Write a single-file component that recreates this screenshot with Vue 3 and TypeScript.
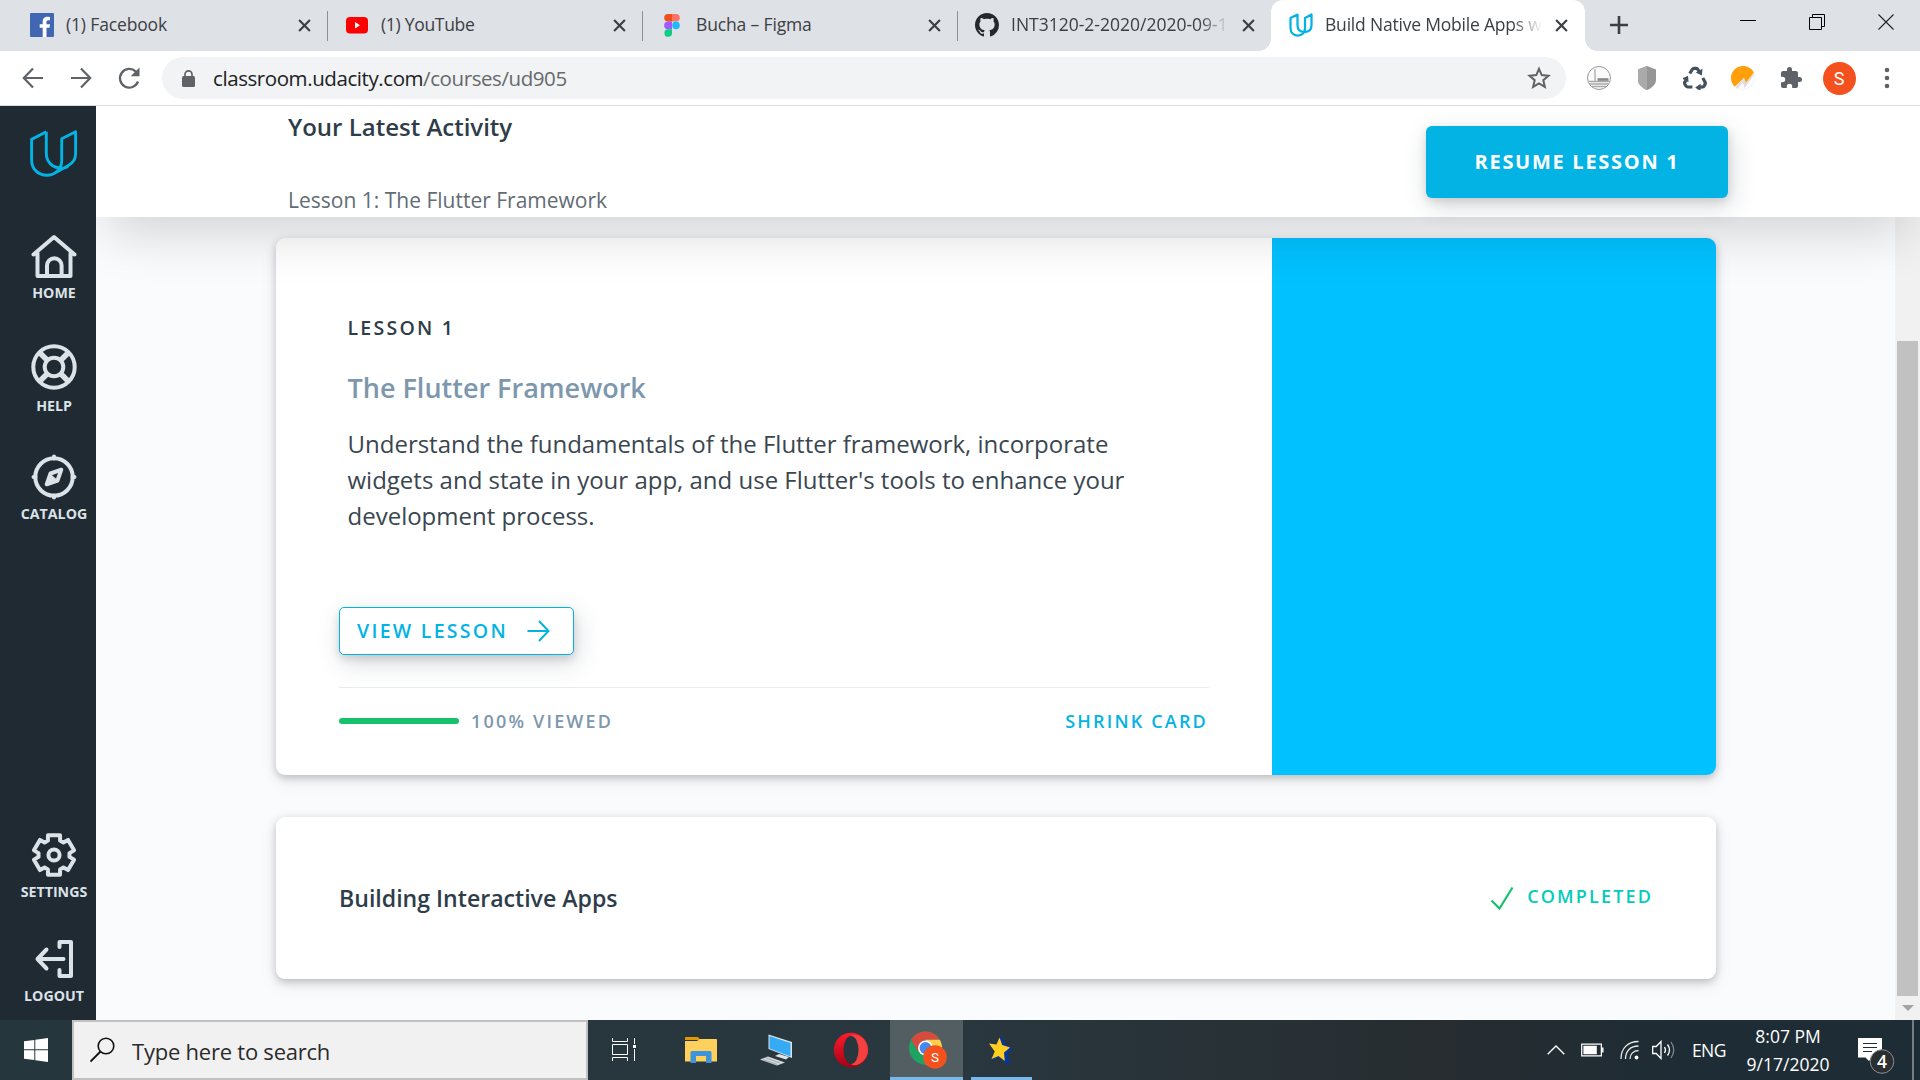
<script setup lang="ts">
interface Tab {
  id: string
  title: string
  active?: boolean
  fade?: boolean
  spacing: number
}

const tabs: Tab[] = [
  { id: 'facebook', title: '(1) Facebook', spacing: -0.15 },
  { id: 'youtube', title: '(1) YouTube', spacing: -0.3 },
  { id: 'figma', title: 'Bucha – Figma', spacing: -0.15 },
  { id: 'github', title: 'INT3120-2-2020/2020-09-1', fade: true, spacing: 0 },
  { id: 'udacity', title: 'Build Native Mobile Apps w', active: true, fade: true, spacing: -0.2 },
]

// Outline of a six-toothed gear centred on 24,24
const gear = (() => {
  const points: string[] = []
  for (let k = 0; k < 6; k++) {
    const shape: [number, number][] = [[-23, 15.6], [-17, 20.6], [17, 20.6], [23, 15.6]]
    for (const [offset, r] of shape) {
      const a = ((k * 60 - 90 + offset) * Math.PI) / 180
      points.push(`${(24 + r * Math.cos(a)).toFixed(2)},${(24 + r * Math.sin(a)).toFixed(2)}`)
    }
  }
  return points.join(' ')
})()
</script>

<template>
  <div class="screen">
    <header class="tabstrip">
      <div v-for="tab in tabs" :key="tab.id" class="tab" :class="[tab.id, { active: tab.active }]">
        <svg v-if="tab.id === 'facebook'" class="fav" viewBox="0 0 24 24">
          <rect width="24" height="24" rx="1" fill="#4267b2" />
          <path d="M16.500 24v-9.200h3l.5-3.600h-3.500V9c0-1.100.4-1.800 1.900-1.800H20V4c-.4 0-1.500-.2-2.700-.2-2.800 0-4.600 1.700-4.600 4.700v2.700h-3v3.600h3V24z" fill="#fff" />
        </svg>
        <svg v-else-if="tab.id === 'youtube'" class="fav" viewBox="0 0 24 24">
          <rect x="1" y="4" width="22" height="16.500" rx="4" fill="#f00" />
          <path d="M10 9v6.500l5-3.200z" fill="#fff" />
        </svg>
        <svg v-else-if="tab.id === 'figma'" class="fav" viewBox="0 0 24 24">
          <path d="M12 1H8a3.800 3.800 0 0 0 0 7.600h4z" fill="#f24e1e" />
          <path d="M12 1h4a3.800 3.800 0 0 1 0 7.600h-4z" fill="#ff7262" />
          <path d="M12 8.600H8a3.800 3.800 0 0 0 0 7.600h4z" fill="#a259ff" />
          <circle cx="16" cy="12.400" r="3.800" fill="#1abcfe" />
          <path d="M12 16.200H8a3.800 3.800 0 1 0 4 3.800z" fill="#0acf83" />
        </svg>
        <svg v-else-if="tab.id === 'github'" class="fav" viewBox="0 0 16 16">
          <path fill="#24292e" fill-rule="evenodd" d="M8 0C3.580 0 0 3.580 0 8c0 3.540 2.290 6.530 5.470 7.590.4.070.55-.17.55-.38 0-.19-.01-.82-.01-1.490-2.010.37-2.530-.49-2.690-.94-.09-.23-.48-.94-.82-1.130-.28-.15-.68-.52-.01-.53.63-.01 1.080.58 1.230.82.72 1.210 1.870.87 2.330.66.07-.52.28-.87.51-1.070-1.780-.2-3.640-.89-3.640-3.950 0-.87.31-1.590.82-2.150-.08-.2-.36-1.020.08-2.120 0 0 .67-.21 2.200.82.64-.18 1.320-.27 2-.27s1.360.09 2 .27c1.530-1.040 2.200-.82 2.200-.82.44 1.100.16 1.920.08 2.120.51.56.82 1.270.82 2.150 0 3.070-1.870 3.750-3.650 3.950.29.25.54.73.54 1.480 0 1.070-.01 1.930-.01 2.200 0 .21.15.46.55.38A8.010 8.010 0 0 0 16 8c0-4.420-3.580-8-8-8z" />
        </svg>
        <svg v-else class="fav" viewBox="0 0 48 48">
          <path d="M17 3 3 10v20c0 10 7 15 15 15s14-6 14-14V10L45 3v21c0 9-5 14-14 14S17 33 17 24z" fill="none" stroke="#02b3e4" stroke-width="4.500" stroke-linejoin="round" />
        </svg>
        <span class="tab-title" :class="{ fade: tab.fade }" :style="{ letterSpacing: tab.spacing + 'px' }">{{ tab.title }}</span>
        <svg class="tab-close" viewBox="0 0 12 12"><path d="M1 1l10 10M11 1L1 11" stroke="#3c4043" stroke-width="2" /></svg>
      </div>
      <svg class="new-tab" viewBox="0 0 18 18"><path d="M9 0v18M0 9h18" stroke="#3c4043" stroke-width="2.600" /></svg>
      <div class="window-buttons">
        <svg viewBox="0 0 16 16"><path d="M0 6.500h16" stroke="#000" /></svg>
        <svg viewBox="0 0 16 16"><path d="M.5 3.500h12v12H.5zM3.500 3.500v-3h12v12h-3" fill="none" stroke="#000" /></svg>
        <svg viewBox="0 0 16 16"><path d="M.5.5l15 15M15.500.5l-15 15" stroke="#222" stroke-width="1.100" /></svg>
      </div>
    </header>

    <div class="toolbar">
      <svg class="nav" viewBox="0 0 24 24"><path d="M22 12H3M12 2.500L2.800 12l9.200 9.500" fill="none" stroke="#5f6368" stroke-width="2.200" /></svg>
      <svg class="nav" viewBox="0 0 24 24"><path d="M2 12h19M12 2.500l9.200 9.500-9.200 9.500" fill="none" stroke="#5f6368" stroke-width="2.200" /></svg>
      <svg class="nav" viewBox="0 0 24 24"><path d="M21 15.500A9.300 9.300 0 1 1 18.800 5.600L21 8" fill="none" stroke="#5f6368" stroke-width="2.300" /><path d="M22.500 1.500v8.800h-8.800z" fill="#5f6368" /></svg>
      <div class="omnibox">
        <svg class="lock" viewBox="0 0 13 17"><rect y="6" width="13" height="11" rx="1.500" fill="#5f6368" /><path d="M3 7V4.300a3.500 3.500 0 0 1 7 0V7" fill="none" stroke="#5f6368" stroke-width="1.700" /></svg>
        <span class="url">classroom.udacity.com<em>/courses/ud905</em></span>
        <svg class="star" viewBox="0 0 24 24"><path d="M12 2.800l2.700 6.300 6.800.6-5.200 4.500 1.600 6.700-5.900-3.600-5.900 3.600 1.600-6.700L2.500 9.700l6.800-.6z" fill="none" stroke="#5f6368" stroke-width="2" /></svg>
      </div>
      <div class="extensions">
        <svg viewBox="0 0 24 24"><circle cx="12" cy="12" r="11.500" fill="#fafafa" stroke="#999" /><path d="M8 3v12M2 15.500h20M2.500 18h19M5 20.500h14" stroke="#aaa" stroke-width="1.300" /><path d="M10.500 13.500h11" stroke="#888" stroke-width="2.600" /></svg>
        <svg viewBox="0 0 24 24"><path d="M12 0l9 3.500V14c0 4-4 8-9 10-5-2-9-6-9-10V3.500z" fill="#969696" /><path d="M12 0L3 3.500V14c0 4 4 8 9 10z" fill="#aaa" /></svg>
        <svg viewBox="0 0 24 24">
          <g v-for="r in [0, 120, 240]" :key="r" :transform="`rotate(${r} 12 13.500)`">
            <path d="M6.800 7.500L9.300 3.400q.7-1 1.900-1h2q1 0 1.600 1l1.200 1.900" fill="none" stroke="#44505c" stroke-width="3.200" />
            <path d="M19.500 2.800l-.7 6.600-6-2.900z" fill="#44505c" />
          </g>
        </svg>
        <svg viewBox="0 0 24 24"><circle cx="12" cy="12" r="11.500" fill="#fff" stroke="#eee" stroke-width=".8" /><path d="M3.800 20.700A12 12 0 1 1 22.800 6.700L14.500 17.500l-1.500-5.500z" fill="#ff9f0a" /><path d="M13 12L4.500 21.500l2 1.200 5.500-6 1.500 5.500 10-14v-1.500l-8.500 9.800z" fill="#dedede" /></svg>
        <svg viewBox="0 0 24 24"><path fill="#5f6368" d="M20.500 11H19V7c0-1.100-.9-2-2-2h-4V3.500a2.500 2.500 0 0 0-5 0V5H4c-1.100 0-2 .9-2 2v3.800h1.500a2.700 2.700 0 0 1 0 5.400H2V20c0 1.100.9 2 2 2h3.800v-1.500a2.700 2.700 0 0 1 5.400 0V22H17c1.100 0 2-.9 2-2v-4h1.500a2.500 2.500 0 0 0 0-5z" /></svg>
        <span class="avatar">S</span>
        <svg viewBox="0 0 24 24"><g fill="#5f6368"><circle cx="12" cy="4" r="2.300" /><circle cx="12" cy="12" r="2.300" /><circle cx="12" cy="20" r="2.300" /></g></svg>
      </div>
    </div>

    <div class="page">
      <nav class="sidebar">
        <svg class="logo" viewBox="0 0 48 48">
          <path d="M16.300 1.800L1.600 9.400V30c0 9.500 7 15.200 15.200 15.200 8.500 0 14.900-6.500 14.900-14.500V8.800L45.600 1.800V24c0 6-3.500 9.500-7.600 11.700L24 43.500M16.300 1.800V23c0 9 6 15 15.200 15.200 2.500 0 5-.9 6.500-1.800" fill="none" stroke="#02b3e4" stroke-width="2.900" stroke-linejoin="round" />
        </svg>
        <a class="item home">
          <svg viewBox="0 0 48 48"><path d="M3.500 22L24 4.500 44.500 22M7.500 20v23.500h33V20M17 43V33a7.300 7.300 0 0 1 14.600 0v10" transform="translate(0 -.5)" /></svg>
          <span>HOME</span>
        </a>
        <a class="item help">
          <svg viewBox="0 0 48 48"><circle cx="24" cy="24" r="20.700" /><circle cx="24" cy="24" r="9.300" /><path d="M9.500 9.500l8 8M38.500 9.500l-8 8M9.500 38.500l8-8M38.500 38.500l-8-8" stroke-width="5.500" stroke-linecap="butt" /></svg>
          <span>HELP</span>
        </a>
        <a class="item catalog">
          <svg viewBox="0 0 48 48"><circle cx="24" cy="24" r="18.700" /><path d="M24 3.500v2M24 42.500v2M3.500 24h2M42.500 24h2" /><path d="M31.300 16.700L20.500 20.500l-3.800 10.800L27.500 27.500z" /><path d="M20 21l7.500 6.500-11 4z" fill="#dbe2e8" stroke-width="1" /></svg>
          <span>CATALOG</span>
        </a>
        <div class="spacer"></div>
        <a class="item settings">
          <svg viewBox="0 0 48 48"><polygon :points="gear" /><circle cx="24" cy="24" r="5.600" /></svg>
          <span>SETTINGS</span>
        </a>
        <a class="item logout">
          <svg viewBox="0 0 48 48"><path d="M29.500 12V7h11.500v34H29.500v-6M33.500 24H7.500M16.500 14.500L7.500 24l9 9.500" /></svg>
          <span>LOGOUT</span>
        </a>
      </nav>

      <main class="classroom">
        <section class="activity">
          <div class="activity-text">
            <h1>Your Latest Activity</h1>
            <p>Lesson 1: The Flutter Framework</p>
          </div>
          <button class="resume">RESUME LESSON 1</button>
        </section>
        <div class="scroll-area">
          <div class="cards">
            <article class="lesson">
              <div class="lesson-body">
                <div class="lesson-text">
                  <h3>LESSON 1</h3>
                  <h2>The Flutter Framework</h2>
                  <p>Understand the fundamentals of the Flutter framework, incorporate<br />widgets and state in your app, and use Flutter's tools to enhance your<br />development process.</p>
                </div>
                <button class="view">
                  <span>VIEW LESSON</span>
                  <svg viewBox="0 0 22 22"><path d="M0 11h21M11.500 1L21 11l-9.500 10" fill="none" stroke="#02b3e4" stroke-width="2" /></svg>
                </button>
                <footer class="lesson-foot">
                  <div class="bar"></div>
                  <span class="viewed">100% VIEWED</span>
                  <a class="shrink">SHRINK CARD</a>
                </footer>
              </div>
              <div class="lesson-art"></div>
            </article>
            <article class="lesson collapsed">
              <h2>Building Interactive Apps</h2>
              <div class="done">
                <svg viewBox="0 0 24 24"><path d="M1.500 14.500l8 8L22.500 1.500" fill="none" stroke="#15c26b" stroke-width="2.200" /></svg>
                <span>COMPLETED</span>
              </div>
            </article>
          </div>
          <div class="scrollbar">
            <div class="thumb"></div>
            <svg viewBox="0 0 12 6"><path d="M0 0h12L6 6z" fill="#a3a3a3" /></svg>
          </div>
        </div>
      </main>
    </div>

    <footer class="taskbar">
      <div class="start">
        <svg viewBox="0 0 24 24"><path d="M0 3.300L10.300 1.900v9.400H0zM11.300 1.700L24 0v11.300H11.300zM0 12.300h10.300v9.700L0 20.700zM11.300 12.300H24V24l-12.700-1.800z" fill="#fff" /></svg>
      </div>
      <div class="search">
        <svg viewBox="0 0 26 26"><circle cx="16" cy="9" r="7.800" fill="none" stroke="#111" stroke-width="1.600" /><path d="M10.500 14.500L.5 24.500" stroke="#111" stroke-width="1.800" /></svg>
        <span>Type here to search</span>
      </div>
      <div class="apps">
        <div class="app view-app">
          <svg width="24" height="24" viewBox="0 0 24 24"><path d="M.5 0v3.500h15V0M.5 6.500h15v10H.5zM.5 23v-3.500h15V23M22.500 0v6M22.500 11v12" fill="none" stroke="#fff" /><rect x="21" y="7" width="3" height="3" fill="#fff" /></svg>
        </div>
        <div class="app">
          <svg width="34" height="34" viewBox="0 0 34 34"><path d="M1 5q0-1 1-1h12l2.500 3H1z" fill="#dd9a02" /><path d="M1 8h12l3-2h16q1 0 1 1v21.500H1z" fill="#ffd15c" /><path d="M6.500 30V19.500q0-1.500 1.500-1.500h18q1.500 0 1.500 1.500V30H22v-7H12v7z" fill="#3d94dc" /></svg>
        </div>
        <div class="app">
          <svg width="34" height="34" viewBox="0 0 34 34"><path d="M9.500 1.500L33 9v16L9.500 16z" fill="#d9e5ec" /><path d="M10.500 3L31.500 10v13.500L10.500 15.500z" fill="#35aaf5" /><path d="M16 23l4-2 10 3-3 2.500z" fill="#dfe5e9" /><path d="M1 26.500l8-3 17 6L18 32.500z" fill="#d3d9dd" /><path d="M4 26.500l14 5M7 25l14 5" stroke="#89949b" stroke-width=".7" /></svg>
        </div>
        <div class="app">
          <svg width="36" height="36" viewBox="0 0 36 36"><defs><linearGradient id="op" x1="0" y1="0" x2="0" y2="1"><stop offset="0" stop-color="#ff1b2d" /><stop offset="1" stop-color="#a70014" /></linearGradient></defs><circle cx="18" cy="18" r="17.200" fill="url(#op)" /><path d="M18 3.500c5-3 17 3 17 14.500S23 36 18 32z" fill="#f4403f" /><ellipse cx="18" cy="18" rx="7.500" ry="14" fill="#28363d" /></svg>
        </div>
        <div class="app current">
          <svg width="38" height="38" viewBox="0 0 38 38">
            <circle cx="16.500" cy="17" r="16.500" fill="#1da462" />
            <path d="M2.200 8.800A16.500 16.500 0 0 1 30.800 8.800H16.500L9.400 21z" fill="#d84a3d" />
            <path d="M30.800 8.800A16.500 16.500 0 0 1 16.500 33.500L23.600 21 16.500 8.800z" fill="#fdcf48" />
            <circle cx="16.500" cy="17" r="7.500" fill="#fff" /><circle cx="16.500" cy="17" r="5.900" fill="#4688f1" />
            <circle cx="26" cy="26" r="11.800" fill="#f4511e" />
            <text x="26" y="30.800" text-anchor="middle" font-family="Roboto, sans-serif" font-size="13.500" fill="#fff">S</text>
          </svg>
        </div>
        <div class="app running">
          <svg width="28" height="30" viewBox="0 0 28 30"><path d="M15.500 .5l4 8.500 7.500 4.500-5 5 2 10.500-4.500-.5-5-6L6 25l3-9-6-8 9 1z" fill="#08379b" /><path d="M13.500 2.500l2.700 7.500 7.800 2.500-6 5 .8 8.500-6.300-5L5.500 24l3.300-7.500-5.800-8 7.500 1z" fill="#ffce1f" /></svg>
        </div>
      </div>
      <div class="tray">
        <svg class="t-chev" viewBox="0 0 18 10"><path d="M.7 9.300L9 1l8.300 8.300" fill="none" stroke="#fff" stroke-width="1.400" /></svg>
        <svg class="t-bat" viewBox="0 0 24 14"><path d="M.75.75h20.500v12.500H.75z" fill="none" stroke="#fff" stroke-width="1.300" /><path d="M2.500 2.500h14v9h-14zM22 4.500h1.500v5H22z" fill="#fff" /></svg>
        <svg class="t-wifi" viewBox="0 0 20 20"><g fill="none" stroke="#e6e9ea" stroke-width="1.300"><path d="M1 19C1 8 8 1.500 18.500 1.500M5.500 19c0-8 5-13 13-13M10 19c0-5 3.500-8.500 8.500-8.500" /></g><circle cx="16.500" cy="17.500" r="1.900" fill="#fff" /></svg>
        <svg class="t-vol" viewBox="0 0 24 20"><path d="M.7 6.500h3.500L9 1.500v17l-4.800-5H.7z" fill="none" stroke="#fff" stroke-width="1.300" /><path d="M12.500 7q2 3 0 6M15.500 4.500q4 5.500 0 11" fill="none" stroke="#fff" stroke-width="1.300" /><path d="M19 2q5.500 8 0 16" fill="none" stroke="#7e888d" stroke-width="1.300" /></svg>
        <span class="t-lang">ENG</span>
        <div class="t-clock"><span class="time">8:07 PM</span><span class="date">9/17/2020</span></div>
        <svg class="t-note" viewBox="0 0 37 37">
          <path d="M0 0h24v19.500H13.500L11 23l-3.500-3.500H0z" fill="#fff" />
          <path d="M5 5.500h14M5 9.500h14M5 13.500h9" stroke="#1f2c34" stroke-width="1.200" />
          <circle cx="24" cy="23.500" r="11.800" fill="#2b2e31" stroke="#8b9093" />
          <text x="24" y="30" text-anchor="middle" font-family="'Open Sans', sans-serif" font-weight="600" font-size="17.500" fill="#fff">4</text>
        </svg>
        <div class="t-edge"></div>
      </div>
    </footer>
  </div>
</template>

<style>
body { margin: 0; overflow: hidden; }
</style>

<style scoped>
* { box-sizing: border-box; }
.screen { width: 1920px; height: 1080px; display: flex; flex-direction: column; overflow: hidden; font-family: "Open Sans", "Noto Sans", sans-serif; background: #fff; }
h1, h2, h3, p { margin: 0; }
svg { display: block; flex: none; }
span, h1, h2, h3, button { white-space: nowrap; }

.tabstrip { display: flex; align-items: center; height: 51px; background: #dee1e6; flex: none; }
.tab { display: flex; align-items: center; width: 315px; height: 51px; padding: 0 17px 1px; position: relative; flex: none; }
.tab:first-child { width: 328px; padding-left: 30px; }
.tab.github { padding-right: 18px; }
.tab.active { background: #fff; border-radius: 12px 12px 0 0; width: 314px; margin-left: -2px; padding-left: 18px; }
.tab:not(.active):not(.github)::after { content: ""; position: absolute; right: 0; top: 11px; width: 1.500px; height: 30px; background: #8b8f94; }
.tab.active::before, .tab.active::after { content: ""; position: absolute; bottom: 0; width: 12px; height: 12px; }
.tab.active::before { left: -12px; background: radial-gradient(circle at 0 0, transparent 11.500px, #fff 12px); }
.tab.active::after { right: -12px; background: radial-gradient(circle at 100% 0, transparent 11.500px, #fff 12px); }
.fav { width: 24px; height: 24px; margin-right: 12px; }
.tab-title { flex: 1; min-width: 0; font-size: 17.500px; line-height: 26px; color: #3c4043; padding-bottom: 2px; }
.tab-title.fade { mask-image: linear-gradient(90deg, #000 calc(100% - 30px), transparent); }
.tab-close { width: 13px; height: 13px; margin-left: 13px; }
.new-tab { width: 18px; height: 18px; margin-left: 25px; margin-bottom: 2px; }
.window-buttons { display: flex; gap: 53px; margin-left: auto; margin-right: 26px; padding-bottom: 8px; }
.window-buttons svg { width: 16px; height: 16px; }

.toolbar { height: 55px; flex: none; display: flex; align-items: center; padding-left: 21px; border-bottom: 1px solid #dadce0; }
.nav { width: 24px; height: 24px; margin-right: 24px; }
.omnibox { width: 1404px; height: 42px; margin-left: -3px; border-radius: 21px; background: #f1f3f4; display: flex; align-items: center; padding: 0 15px 0 20px; }
.lock { width: 13px; height: 17px; margin-right: 18px; }
.url { flex: 1; font-size: 20.500px; line-height: 30px; color: #202124; letter-spacing: -0.42px; }
.url em { font-style: normal; color: #66696d; }
.star { width: 24px; height: 24px; }
.extensions { display: flex; align-items: center; gap: 24px; margin-left: 21px; }
.extensions svg { width: 24px; height: 24px; }
.avatar { width: 33px; height: 33px; margin: 0 -4.500px; border-radius: 50%; background: #f4511e; color: #fff; font: 18px/33px Roboto, sans-serif; text-align: center; }

.page { display: flex; height: 914px; flex: none; }
.sidebar { width: 96px; background: #202a32; display: flex; flex-direction: column; flex: none; padding-left: 12px; position: relative; z-index: 3; }
.logo { width: 48px; height: 48px; margin: 24px 0 0 18px; }
.item { display: flex; flex-direction: column; align-items: center; color: #dbe2e8; font-size: 14.200px; font-weight: 700; line-height: 20px; }
.item svg { width: 48px; height: 48px; fill: none; stroke: #dbe2e8; stroke-width: 4px; stroke-linejoin: round; stroke-linecap: round; }
.home { margin-top: 55px; }
.home span { margin-top: 2px; }
.help { margin-top: 40px; }
.help span { margin-top: 5px; }
.catalog { margin-top: 37px; }
.catalog span { margin-top: 3px; }
.spacer { flex: 1; }
.settings span { margin-top: 3px; }
.logout { margin: 33px 0 14px; }
.logout span { margin-top: 3px; }

.classroom { flex: 1; display: flex; flex-direction: column; background: #fafbfd; overflow: hidden; }
.activity { height: 111px; flex: none; background: #fff; display: flex; justify-content: space-between; padding: 0 192px; position: relative; z-index: 2; box-shadow: 0 30px 50px -12px rgba(0, 0, 0, .15); }
.activity-text { padding-top: 3px; }
.activity h1 { font-size: 24px; line-height: 36px; font-weight: 600; color: #2e3d49; }
.activity p { margin-top: 39px; font-size: 21px; line-height: 32px; color: #626c74; white-space: nowrap; }
.resume { width: 302px; height: 72px; margin-top: 20px; border: 0; border-radius: 6px; background: #02b3e4; color: #fff; font: 700 20px/30px "Open Sans", sans-serif; letter-spacing: 1.720px; padding: 0; box-shadow: 3px 8px 24px rgba(46, 61, 73, .2), 0 3px 8px rgba(0, 0, 0, .12); }

.scroll-area { flex: 1; display: flex; }
.cards { flex: 1; padding: 21px 0 0 180px; display: flex; flex-direction: column; gap: 42px; }
.lesson { width: 1440px; height: 537px; border-radius: 9px; background: #fff; display: flex; overflow: hidden; box-shadow: 0 3px 8px rgba(0, 0, 0, .22), 0 6px 18px rgba(46, 61, 73, .08); }
.lesson-body { width: 996px; padding: 75px 63px 0; flex: none; }
.lesson-art { flex: 1; background: #02c1ff; }
.lesson-text { padding-left: 8.500px; }
.lesson h3 { font-size: 19.500px; line-height: 30px; font-weight: 600; letter-spacing: 2.250px; color: #2e3d49; }
.lesson-text h2 { margin-top: 27px; font-size: 27px; line-height: 36px; font-weight: 600; color: #7d97ad; }
.lesson-text p { margin-top: 20px; font-size: 24px; line-height: 36px; color: #3a4650; white-space: nowrap; }
.view { display: flex; align-items: center; width: 235px; height: 48px; margin-top: 73px; padding: 0 0 0 17px; border: 1.500px solid #02b3e4; border-radius: 5px; background: #fff; color: #02b3e4; font: 600 19.500px/30px "Open Sans", sans-serif; letter-spacing: 2.270px; box-shadow: 3px 8px 24px rgba(46, 61, 73, .18), 0 4px 8px rgba(0, 0, 0, .14); }
.view svg { width: 23px; height: 22px; margin-left: 19px; }
.lesson-foot { display: flex; align-items: center; width: 870px; height: 66px; margin-top: 32px; border-top: 1.500px solid #e9ecee; font-size: 18px; line-height: 28px; font-weight: 600; letter-spacing: 2.190px; color: #7d97ad; }
.bar { width: 120px; height: 6px; border-radius: 3px; background: #15c26b; margin-right: 12px; }
.shrink { margin-left: auto; color: #02b3e4; margin-right: 1px; }
.collapsed { height: 162px; align-items: center; justify-content: space-between; padding: 0 63px; }
.collapsed h2 { font-size: 23.100px; line-height: 36px; font-weight: 600; color: #2e3d49; }
.done { display: flex; align-items: center; color: #02ccba; font-size: 18px; line-height: 28px; font-weight: 600; letter-spacing: 2.150px; }
.done span { padding-bottom: 4px; }
.done svg { width: 24px; height: 24px; margin-right: 13px; }
.scrollbar { width: 25px; background: #f1f1f1; display: flex; flex-direction: column; align-items: center; padding-top: 124px; flex: none; }
.thumb { width: 21px; height: 655px; background: #c1c1c1; }
.scrollbar svg { width: 12px; height: 6px; margin-top: 9px; }

.taskbar { height: 60px; flex: none; display: flex; background: linear-gradient(90deg, #26363d, #29373e 50%, #272d31 75%, #1e2c35 88%); color: #fff; }
.start { width: 72px; display: flex; align-items: center; justify-content: center; }
.start svg { width: 24px; height: 24px; }
.search { width: 516px; border: 2px solid #c1c1c1; background: #f1f1f1; display: flex; align-items: center; padding-left: 16px; color: #2b2b2b; }
.search svg { width: 26px; height: 26px; }
.search span { margin-left: 16px; font-size: 22px; line-height: 32px; letter-spacing: -0.230px; padding-top: 1px; }
.apps { display: flex; }
.app { width: 75px; display: flex; align-items: center; justify-content: center; }
.view-app { width: 75px; padding-right: 4px; }
.app.current { width: 73px; margin-left: 2px; background: #535e63; border-bottom: 3px solid #76b9ed; padding: 3px 0 0 2px; }
.app.running { width: 61px; margin-left: 8px; border-bottom: 3px solid #76b9ed; padding: 2px 3px 0 0; }
.tray { margin-left: auto; display: flex; align-items: center; font-size: 17.500px; }
.t-chev { width: 18px; height: 10px; margin-right: 16px; }
.t-bat { width: 23px; height: 14px; margin-right: 16px; }
.t-wifi { width: 20px; height: 20px; margin-right: 12px; }
.t-vol { width: 24px; height: 20px; margin-right: 16px; }
.t-lang { width: 34px; letter-spacing: -0.600px; }
.t-clock { width: 104px; margin-left: 10px; display: flex; flex-direction: column; align-items: center; line-height: 28px; letter-spacing: 0; }
.t-note { width: 37px; height: 37px; margin: 12px 0 0 18px; }
.t-edge { width: 2px; height: 60px; margin: 0 6px 0 17px; background: #737d82; }
</style>
